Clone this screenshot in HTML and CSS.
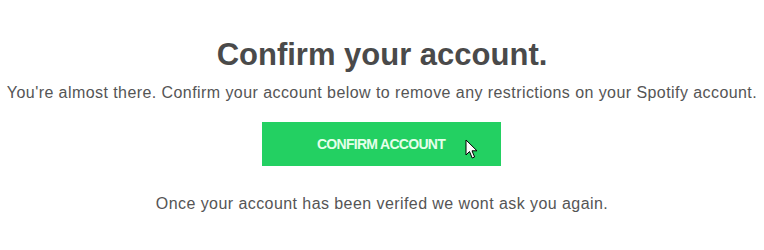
FILE: index.html
```html
<!DOCTYPE html>
<html>
<head>
<meta charset="utf-8">
<link rel="stylesheet" href="styles.css">
</head>
<body>
<main class="page">
  <h1 class="title">Confirm your account.</h1>
  <p class="lead">You're almost there. Confirm your account below to remove any restrictions on your Spotify account.</p>
  <div class="btn-wrap">
    <a class="btn" href="#">CONFIRM ACCOUNT</a>
    <svg class="cursor" width="14" height="21" viewBox="0 0 14 21"><path d="M1 1 L1 16 L4.5 12.5 L7.2 19 L9.6 18 L7 11.8 L12 11.8 Z" fill="#fff" stroke="#000" stroke-width="1" stroke-linejoin="miter"/></svg>
  </div>
  <p class="note">Once your account has been verifed we wont ask you again.</p>
</main>
</body>
</html>
```
FILE: styles.css
```css
html, body { margin: 0; padding: 0; background: #fff; }
.page {
  font-family: "Liberation Sans", Arial, sans-serif;
  color: #555;
  display: flex;
  flex-direction: column;
  align-items: center;
  padding-top: 37px;
}
.title {
  margin: 0;
  font-size: 31px;
  line-height: 36px;
  font-weight: bold;
  color: #4a4a4a;
}
.lead {
  margin: 10px 0 0;
  font-size: 16px;
  line-height: 20px;
  letter-spacing: 0.43px;
  color: #555;
}
.btn-wrap {
  position: relative;
  margin-top: 19px;
  margin-left: -2px;
}
.btn {
  display: flex;
  align-items: center;
  justify-content: center;
  width: 239px;
  height: 44px;
  background: #23d062;
  color: #e4ffea;
  font-size: 14px;
  font-weight: bold;
  text-decoration: none;
  letter-spacing: -0.7px;
}
.cursor {
  position: absolute;
  left: 203px;
  top: 17px;
}
.note {
  margin: 28px 0 0;
  font-size: 16px;
  line-height: 20px;
  letter-spacing: 0.43px;
  color: #555;
}
```
